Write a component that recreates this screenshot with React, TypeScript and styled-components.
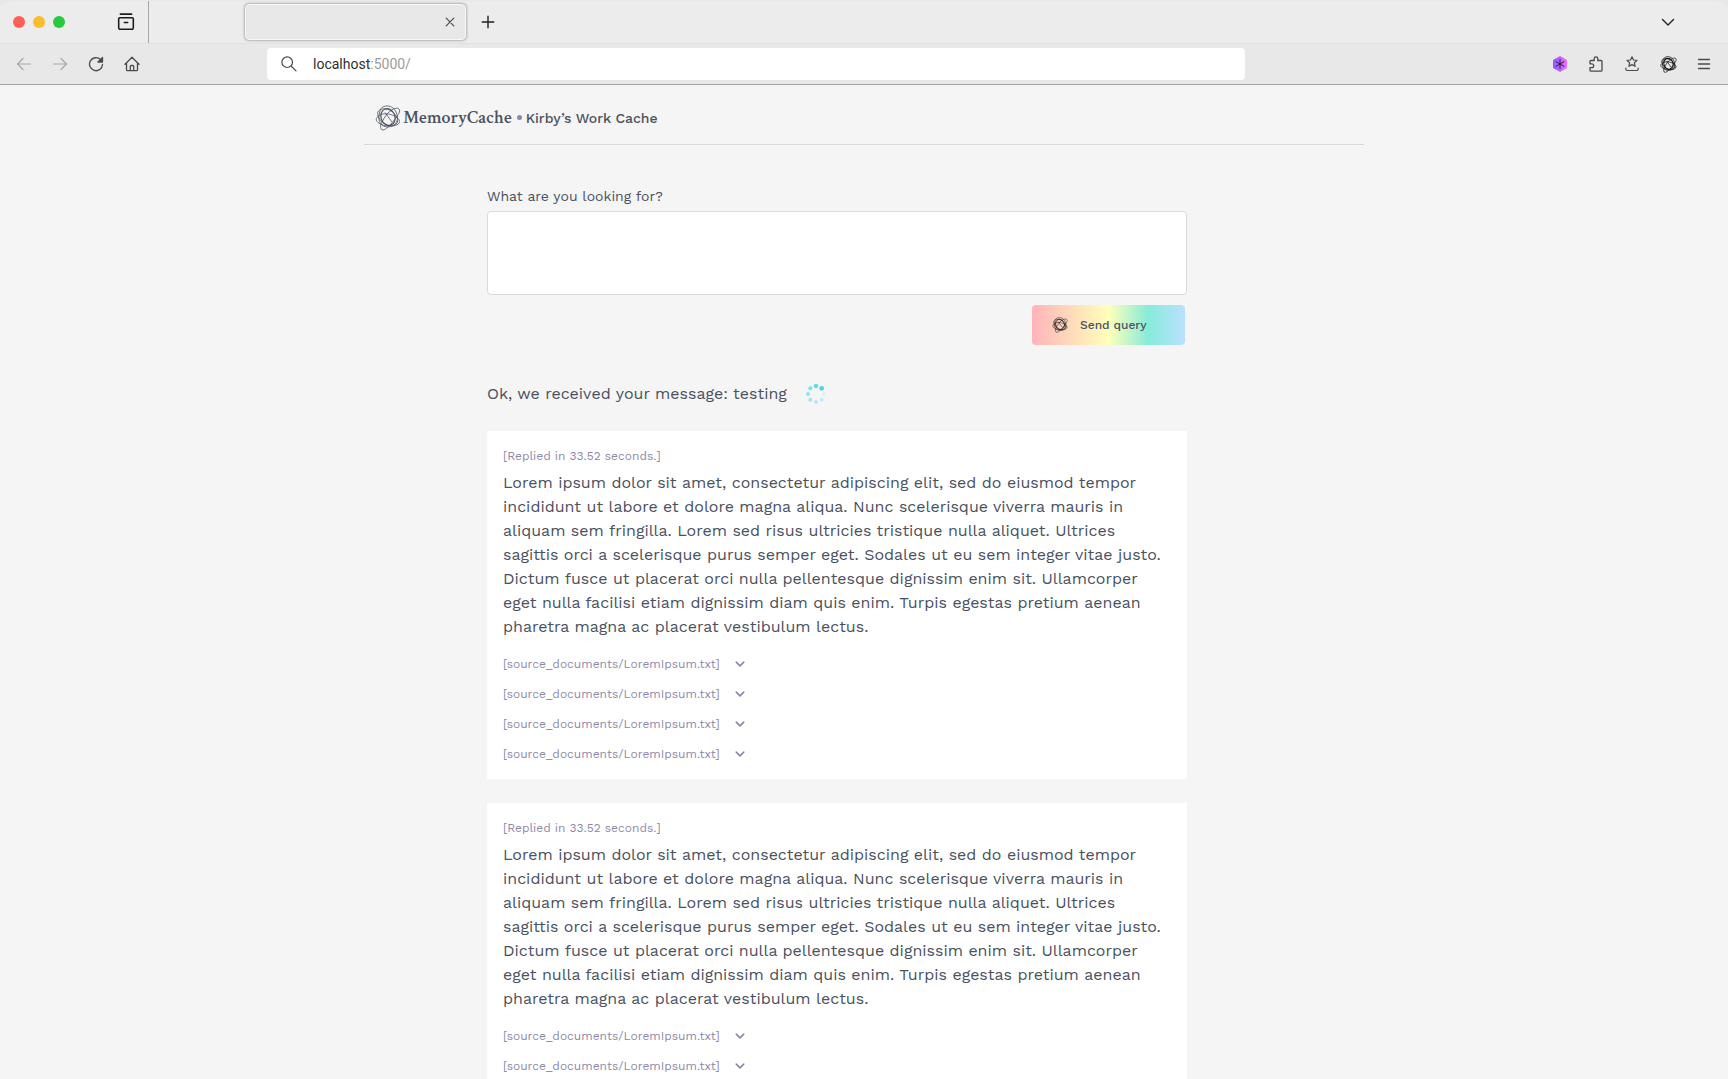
import React, { useId } from "react";
import styled, { createGlobalStyle } from "styled-components";

const ui = `Roboto, "Liberation Sans", sans-serif`;
const body = `"Work Sans", "Noto Sans", "Open Sans", sans-serif`;
const ink = "#4a5160";
const muted = "#8e88aa";

const Global = createGlobalStyle`
  *, *::before, *::after { box-sizing: border-box; }
  body { margin: 0; background: #f5f5f5; color: ${ink}; font-family: ${body}; }
  button, input, textarea { font: inherit; color: inherit; }
  html, body, #root { height: 100%; }
`;

const Screen = styled.div`
  height: 100%;
  display: flex;
  flex-direction: column;
`;

const Chrome = styled.header`
  flex: none;
  border-bottom: 1px solid #a3a3a3;
  background: #e8e8e8;
`;

const TabStrip = styled.div`
  display: flex;
  align-items: center;
  height: 43px;
  margin-top: 1px;
  padding-right: 50px;
  background: #ececec;
  border-bottom: 1px solid #e1e1e1;
  border-radius: 10px 10px 0 0;
`;

const WindowTools = styled.div`
  display: flex;
  align-items: center;
  justify-content: space-between;
  width: 149px;
  height: 42px;
  padding: 0 12px 0 13px;
  border-right: 1px solid #a8a8a8;
`;

const Lights = styled.div`
  display: flex;
  gap: 8px;
`;

const Light = styled.button<{ $color: string }>`
  width: 12px;
  height: 12px;
  padding: 0;
  border: 0;
  border-radius: 50%;
  background: ${(p) => p.$color};
`;

const IconButton = styled.button<{ $color?: string }>`
  display: grid;
  place-items: center;
  flex: none;
  width: 20px;
  height: 20px;
  padding: 0;
  border: 0;
  background: none;
  color: ${(p) => p.$color ?? "#4a4a4a"};
`;

const Tab = styled.div`
  display: flex;
  align-items: center;
  justify-content: flex-end;
  width: 221px;
  height: 36px;
  margin: 0 12px 0 96px;
  padding-right: 5px;
  border: 1px solid #f7f7f7;
  border-radius: 4px;
  background: #e8e8e8;
  box-shadow: 0 0 3px rgba(0, 0, 0, 0.5);
`;

const Spacer = styled.div`
  flex: 1;
`;

const Toolbar = styled.div`
  display: flex;
  align-items: center;
  height: 40px;
  padding: 0 14px;
`;

const NavGroup = styled.div`
  display: flex;
  gap: 16px;
  width: 253px;
`;

const AddressBar = styled.label`
  display: flex;
  align-items: center;
  gap: 16px;
  flex: 0 1 978px;
  height: 32px;
  padding: 0 14px;
  border-radius: 4px;
  background: #fff;
  color: #4a4a4a;
`;

const Address = styled.div`
  font: 14px/20px ${ui};
  color: #9b9b9b;

  b { font-weight: 400; color: #2f2f2f; }
`;

const Extensions = styled.div`
  display: flex;
  gap: 16px;
`;

const Page = styled.main`
  flex: 1;
  min-height: 0;
  overflow-y: auto;
  scrollbar-width: none;
`;

const Content = styled.div`
  max-width: 1000px;
  margin: 0 auto;
`;

const Masthead = styled.div`
  display: flex;
  align-items: center;
  height: 60px;
  padding: 6px 11px 0;
  border-bottom: 1px solid #dadada;
`;

const Brand = styled.a`
  display: flex;
  align-items: center;
  gap: 2px;
  color: ${ink};
  font: 600 18px/28px "Crimson Text", "Liberation Serif", serif;
  text-decoration: none;
`;

const Dot = styled.span`
  width: 5px;
  height: 5px;
  margin: 0 4px 0 5px;
  border-radius: 50%;
  background: ${muted};
`;

const CacheName = styled.h1`
  margin: 0;
  font: 500 14px/20px ${body};
`;

const Column = styled.div`
  width: 70%;
  margin: 40px 0 0 123px;
`;

const QueryForm = styled.form`
  display: flex;
  flex-direction: column;
`;

const FieldLabel = styled.label`
  margin-bottom: 4px;
  font-size: 14px;
  line-height: 22px;
`;

const QueryBox = styled.textarea`
  height: 84px;
  padding: 8px;
  border: 1px solid #dadada;
  border-radius: 4px;
  background: #fff;
  resize: none;
`;

const SendButton = styled.button`
  display: flex;
  align-items: center;
  align-self: flex-end;
  gap: 12px;
  width: 153px;
  height: 40px;
  margin: 10px 2px 0 0;
  padding: 0 20px;
  border: 0;
  border-radius: 4px;
  background: linear-gradient(90deg, #ffb3ba 0%, #ffdfba 28%, #ffffba 50%, #87ebda 76%, #bae1ff 100%);
  font-size: 12px;
  font-weight: 500;
  line-height: 16px;
`;

const Status = styled.p`
  display: flex;
  align-items: center;
  gap: 18px;
  margin: 37px 0 25px;
  font-size: 16px;
  line-height: 24px;
`;

const Reply = styled.article`
  margin-bottom: 24px;
  padding: 16px;
  background: #fff;
`;

const Timing = styled.p`
  margin: 0 0 6px;
  color: ${muted};
  font-size: 12px;
  line-height: 18px;
`;

const Answer = styled.p`
  margin: 0 0 16px;
  font-size: 16px;
  line-height: 24px;
`;

const Sources = styled.ul`
  display: grid;
  gap: 12px;
  margin: 0;
  padding: 0;
  list-style: none;
`;

const Source = styled.button`
  display: flex;
  align-items: center;
  gap: 15px;
  padding: 0;
  border: 0;
  background: none;
  color: ${muted};
  font-size: 12px;
  line-height: 18px;
`;

const Line = ({ d, size = 16, w = 1.3, solid }: { d: string; size?: number; w?: number; solid?: string }) => (
  <svg width={size} height={size} viewBox="0 0 16 16" fill="none" stroke="currentColor" strokeWidth={w} strokeLinecap="round" strokeLinejoin="round" aria-hidden>
    <path d={d} />
    {solid && <path d={solid} fill="currentColor" />}
  </svg>
);

const Scribble = ({ size, color = "currentColor", w = 0.9 }: { size: number; color?: string; w?: number }) => (
  <svg width={size} height={size} viewBox="0 0 26 26" fill="none" stroke={color} strokeWidth={w} aria-hidden>
    <path d="M9 1.500c4-1.500 9 0 11.500 4.500s3 9.500-.5 13-9.500 4-13 1S3.500 12 4.500 8 6 2.500 9 1.500z" />
    <ellipse cx="13" cy="12" rx="7" ry="8.500" transform="rotate(-20 13 12)" strokeWidth={w * 1.5} />
    <path d="M24 4c2 2-1 6-4 10s-9 11-12 11-3-4-1-8S12 8 16 5.500s6.500-3 8-1.500z" />
    <path d="M2.500 12c2-3 8-4 13-2.500s9 4 9 7-4 4.500-9 4.500-10-1-12.500-3.500-2-4-.5-5.500z" />
    <path d="M4.500 5c3-2 9-1.500 13 2s6 7 5 10-5 4.500-9 3.500S5 16 3.500 12 2.500 6.500 4.500 5z" />
    <path d="M10 7.500l7 9.500" />
  </svg>
);

const Spinner = () => {
  const dots = [0.12, 0.28, 0.38, 0.5, 0.6, 0.7, 0.85, 1];
  return (
    <svg width="22" height="22" viewBox="0 0 22 22" fill="#3fd9ea" role="img" aria-label="Loading">
      {dots.map((o, i) => (
        <circle key={i} cx={11 + 8 * Math.cos((i * Math.PI) / 4)} cy={11 + 8 * Math.sin((i * Math.PI) / 4)} r={i < 6 ? 2 : 2.3} opacity={o} />
      ))}
    </svg>
  );
};

const answer =
  "Lorem ipsum dolor sit amet, consectetur adipiscing elit, sed do eiusmod tempor incididunt ut labore et dolore magna aliqua. Nunc scelerisque viverra mauris in aliquam sem fringilla. Lorem sed risus ultricies tristique nulla aliquet. Ultrices sagittis orci a scelerisque purus semper eget. Sodales ut eu sem integer vitae justo. Dictum fusce ut placerat orci nulla pellentesque dignissim enim sit. Ullamcorper eget nulla facilisi etiam dignissim diam quis enim. Turpis egestas pretium aenean pharetra magna ac placerat vestibulum lectus.";

const replies = [0, 1].map(() => ({
  seconds: "33.52",
  answer,
  sources: Array(4).fill("source_documents/LoremIpsum.txt") as string[],
}));

export default function App() {
  const queryId = useId();
  return (
    <Screen>
      <Global />
      <Chrome>
        <TabStrip>
          <WindowTools>
            <Lights>
              <Light $color="#fe5f57" aria-label="Close window" />
              <Light $color="#febb2e" aria-label="Minimize window" />
              <Light $color="#28c840" aria-label="Zoom window" />
            </Lights>
            <IconButton aria-label="Recent browsing" $color="#1c1c1c">
              <Line size={18} d="M3 1h10M2.500 4.200h11a1 1 0 0 1 1 1v8a1.300 1.300 0 0 1-1.300 1.300H2.800a1.300 1.300 0 0 1-1.300-1.300v-8a1 1 0 0 1 1-1zM6.500 8.500h3" w={1.4} />
            </IconButton>
          </WindowTools>
          <Tab>
            <IconButton aria-label="Close tab">
              <Line d="M4.200 4.200l7.600 7.600M11.800 4.200l-7.600 7.600" w={1.2} />
            </IconButton>
          </Tab>
          <IconButton aria-label="New tab" $color="#222">
            <Line d="M8 2.200v11.600M2.200 8h11.600" w={1.4} />
          </IconButton>
          <Spacer />
          <IconButton aria-label="List all tabs" $color="#222">
            <Line d="M2.500 5.500L8 11l5.500-5.500" w={1.4} />
          </IconButton>
        </TabStrip>
        <Toolbar>
          <NavGroup>
            <IconButton aria-label="Back" $color="#a8a8a8">
              <Line d="M14.500 8h-13M7 2.500L1.500 8 7 13.500" w={1.2} />
            </IconButton>
            <IconButton aria-label="Forward" $color="#a8a8a8">
              <Line d="M1.500 8h13M9 2.500L14.500 8 9 13.500" w={1.2} />
            </IconButton>
            <IconButton aria-label="Reload">
              <Line d="M12.500 3.500A6.500 6.500 0 1 0 14.500 8.500" solid="M14.500 1.500v4.500h-4.500z" />
            </IconButton>
            <IconButton aria-label="Home">
              <Line d="M1 8.200l7-7 7 7M2.500 7v6.700a1 1 0 0 0 1 1h9a1 1 0 0 0 1-1V7M6.300 14.500v-4a1 1 0 0 1 1-1h1.400a1 1 0 0 1 1 1v4" />
            </IconButton>
          </NavGroup>
          <AddressBar>
            <Line d="M11.500 6.200a5.300 5.300 0 1 1-10.600 0 5.300 5.300 0 0 1 10.600 0zM10.100 10l4.900 4.900" w={1.2} />
            <Address><b>localhost</b>:5000/</Address>
          </AddressBar>
          <Spacer />
          <Extensions>
            <IconButton aria-label="Hexagon extension">
              <svg width="16" height="16" viewBox="0 0 16 16" aria-hidden>
                <defs>
                  <linearGradient id="hex"><stop stopColor="#8a5cff" /><stop offset="1" stopColor="#f06bff" /></linearGradient>
                </defs>
                <path d="M8 0l7 4v8l-7 4-7-4V4z" fill="url(#hex)" />
                <path d="M8 3v10M3.700 5.500l8.600 5M12.300 5.500l-8.600 5" stroke="#2a1840" />
              </svg>
            </IconButton>
            <IconButton aria-label="Extensions">
              <Line d="M2 7.800V5.500a1 1 0 0 1 1-1h3.200V2.600a1.800 1.800 0 0 1 3.600 0v1.900H13a1 1 0 0 1 1 1v8.700a1 1 0 0 1-1 1H3a1 1 0 0 1-1-1v-2.600h1.800a1.900 1.900 0 0 0 0-3.800z" />
            </IconButton>
            <IconButton aria-label="Bookmarks">
              <Line d="M8 .8l1.500 3.200 3.500.4-2.600 2.400.7 3.500L8 8.600l-3.100 1.700.7-3.500L3 4.400 6.500 4zM1.800 12v1a1.500 1.500 0 0 0 1.500 1.500h9.400a1.500 1.500 0 0 0 1.500-1.500v-1" w={1.2} />
            </IconButton>
            <IconButton aria-label="MemoryCache extension" $color="#111">
              <Scribble size={17} w={1.1} />
            </IconButton>
            <IconButton aria-label="Menu">
              <Line d="M2.500 3.500h11M2.500 8h11M2.500 12.500h11" />
            </IconButton>
          </Extensions>
        </Toolbar>
      </Chrome>
      <Page>
        <Content>
          <Masthead>
            <Brand href="#"><Scribble size={26} w={0.8} />MemoryCache</Brand>
            <Dot />
            <CacheName>Kirby’s Work Cache</CacheName>
          </Masthead>
          <Column>
            <QueryForm onSubmit={(e) => e.preventDefault()}>
              <FieldLabel htmlFor={queryId}>What are you looking for?</FieldLabel>
              <QueryBox id={queryId} />
              <SendButton type="submit"><Scribble size={16} color="#222" w={0.9} />Send query</SendButton>
            </QueryForm>
            <Status>Ok, we received your message: testing<Spinner /></Status>
            {replies.map((r, i) => (
              <Reply key={i}>
                <Timing>[Replied in {r.seconds} seconds.]</Timing>
                <Answer>{r.answer}</Answer>
                <Sources>
                  {r.sources.map((s, j) => (
                    <li key={j}>
                      <Source>[{s}]<Line size={10} d="M2 5l6 6 6-6" w={2.6} /></Source>
                    </li>
                  ))}
                </Sources>
              </Reply>
            ))}
          </Column>
        </Content>
      </Page>
    </Screen>
  );
}
